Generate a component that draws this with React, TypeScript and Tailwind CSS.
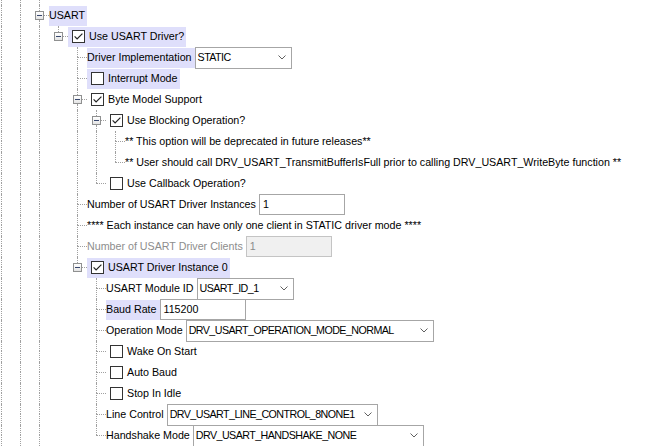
import React from "react";

type Guide = "full" | "none" | "tee" | "elbow" | "exp" | "expLast";

const line = "border-dotted border-[#a0a0a0]";

const GuideCell = ({ kind }: { kind: Guide }) => {
  if (kind === "exp" || kind === "expLast") {
    return (
      <div className="flex h-full w-[19px] shrink-0 flex-col">
        <div className={`ml-[9px] h-[6px] border-l ${line}`} />
        <div className="flex h-[9px]">
          <div className="ml-[5px] flex h-[9px] w-[9px] shrink-0 items-center justify-center border border-[#8f9090] bg-gradient-to-b from-white to-[#e4e4e4]">
            <div className="h-px w-[5px] bg-[#37476e]" />
          </div>
          <div className={`mt-[4px] h-0 flex-1 border-t ${line}`} />
        </div>
        {kind === "exp" && <div className={`ml-[9px] h-[6px] border-l ${line}`} />}
      </div>
    );
  }
  const top = kind === "none" ? "" : `border-l ${line}`;
  let bottom = "";
  if (kind === "full") bottom = `border-l ${line}`;
  if (kind === "tee") bottom = `border-l border-t ${line}`;
  if (kind === "elbow") bottom = `border-t ${line}`;
  return (
    <div className="grid h-full w-[19px] shrink-0 grid-cols-[9px_10px] grid-rows-[10px_11px]">
      <div />
      <div className={top} />
      <div />
      <div className={bottom} />
    </div>
  );
};

const CheckBox = ({ checked }: { checked: boolean }) => (
  <svg width="13" height="13" viewBox="0 0 13 13" className="shrink-0">
    <rect x="0.5" y="0.5" width="12" height="12" fill="#fff" stroke="#333" />
    {checked && <path d="M2.6 6.4 L5.1 9 L10.4 3.6" fill="none" stroke="#222" strokeWidth="1.2" />}
  </svg>
);

const Combo = ({ value, width }: { value: string; width: string }) => (
  <div className={`flex h-[22px] shrink-0 items-center justify-between border border-[#a6a6a6] bg-white pl-[2px] pr-[5px] ${width}`}>
    <span className="tracking-[-0.55px]">{value}</span>
    <svg width="8" height="5" viewBox="0 0 8 5" className="shrink-0">
      <path d="M0.5 0.5 L4 4 L7.5 0.5" fill="none" stroke="#606060" />
    </svg>
  </div>
);

const Field = ({ value, disabled }: { value: string; disabled?: boolean }) => (
  <div
    className={`flex h-[21px] w-[86px] shrink-0 items-center border pl-[3px] ${
      disabled ? "border-[#c4c4c4] bg-[#f0f0f0] text-[#8a8a8a]" : "border-[#a6a6a6] bg-white"
    }`}
  >
    {value}
  </div>
);

const Check = ({ label, checked, hl }: { label: string; checked: boolean; hl?: boolean }) => (
  <div className={`flex h-[20px] items-center gap-[4px] pl-[4px] pr-[2px] ${hl ? "bg-[#dfdffb]" : ""}`}>
    <CheckBox checked={checked} />
    <span>{label}</span>
  </div>
);

const Label = ({ text, hl, muted }: { text: string; hl?: boolean; muted?: boolean }) => (
  <span className={`flex h-[20px] items-center pr-[3px] ${hl ? "bg-[#dfdffb]" : ""} ${muted ? "text-[#8d8d8d]" : ""}`}>
    {text}
  </span>
);

const F: Guide = "full";
const N: Guide = "none";
const T: Guide = "tee";
const L: Guide = "elbow";

const rows: { guides: Guide[]; content: React.ReactNode }[] = [
  { guides: [F, F, "exp"], content: <span className="flex h-[20px] items-center bg-[#dfdffb] pr-[2px]">USART</span> },
  { guides: [F, F, F, "expLast"], content: <Check label="Use USART Driver?" checked hl /> },
  {
    guides: [F, F, F, N, T],
    content: (
      <>
        <Label text="Driver Implementation" hl />
        <Combo value="STATIC" width="w-[97px]" />
      </>
    ),
  },
  { guides: [F, F, F, N, T], content: <Check label="Interrupt Mode" checked={false} hl /> },
  { guides: [F, F, F, N, "exp"], content: <Check label="Byte Model Support" checked /> },
  { guides: [F, F, F, N, F, "exp"], content: <Check label="Use Blocking Operation?" checked /> },
  { guides: [F, F, F, N, F, F, T], content: <span>** This option will be deprecated in future releases**</span> },
  {
    guides: [F, F, F, N, F, F, L],
    content: <span>** User should call DRV_USART_TransmitBufferIsFull prior to calling DRV_USART_WriteByte function **</span>,
  },
  { guides: [F, F, F, N, F, L], content: <Check label="Use Callback Operation?" checked={false} /> },
  {
    guides: [F, F, F, N, T],
    content: (
      <>
        <Label text="Number of USART Driver Instances" />
        <Field value="1" />
      </>
    ),
  },
  { guides: [F, F, F, N, T], content: <span>**** Each instance can have only one client in STATIC driver mode ****</span> },
  {
    guides: [F, F, F, N, T],
    content: (
      <>
        <Label text="Number of USART Driver Clients" muted />
        <Field value="1" disabled />
      </>
    ),
  },
  { guides: [F, F, F, N, "expLast"], content: <Check label="USART Driver Instance 0" checked hl /> },
  {
    guides: [F, F, F, N, N, T],
    content: (
      <>
        <Label text="USART Module ID" />
        <Combo value="USART_ID_1" width="w-[97px]" />
      </>
    ),
  },
  {
    guides: [F, F, F, N, N, T],
    content: (
      <>
        <Label text="Baud Rate" hl />
        <Field value="115200" />
      </>
    ),
  },
  {
    guides: [F, F, F, N, N, T],
    content: (
      <>
        <Label text="Operation Mode" />
        <Combo value="DRV_USART_OPERATION_MODE_NORMAL" width="w-[248px]" />
      </>
    ),
  },
  { guides: [F, F, F, N, N, T], content: <Check label="Wake On Start" checked={false} /> },
  { guides: [F, F, F, N, N, T], content: <Check label="Auto Baud" checked={false} /> },
  { guides: [F, F, F, N, N, T], content: <Check label="Stop In Idle" checked={false} /> },
  {
    guides: [F, F, F, N, N, T],
    content: (
      <>
        <Label text="Line Control" />
        <Combo value="DRV_USART_LINE_CONTROL_8NONE1" width="w-[211px]" />
      </>
    ),
  },
  {
    guides: [F, F, F, N, N, L],
    content: (
      <>
        <Label text="Handshake Mode" />
        <Combo value="DRV_USART_HANDSHAKE_NONE" width="w-[231px]" />
      </>
    ),
  },
];

export default function App() {
  return (
    <div className="h-[446px] w-[653px] overflow-hidden bg-white text-[10.7px] leading-none text-black [font-family:'Liberation_Sans',Arial,sans-serif]">
      <div className="ml-[-8px] flex flex-col">
        <div className="flex h-[5px]">
          {[0, 1, 2].map((i) => (
            <div key={i} className="w-[19px] shrink-0">
              <div className={`ml-[9px] h-full border-l ${line}`} />
            </div>
          ))}
        </div>
        {rows.map((r, i) => (
          <div key={i} className="flex h-[21px] shrink-0 items-center whitespace-nowrap">
            {r.guides.map((g, j) => (
              <GuideCell key={j} kind={g} />
            ))}
            {r.content}
          </div>
        ))}
      </div>
    </div>
  );
}
